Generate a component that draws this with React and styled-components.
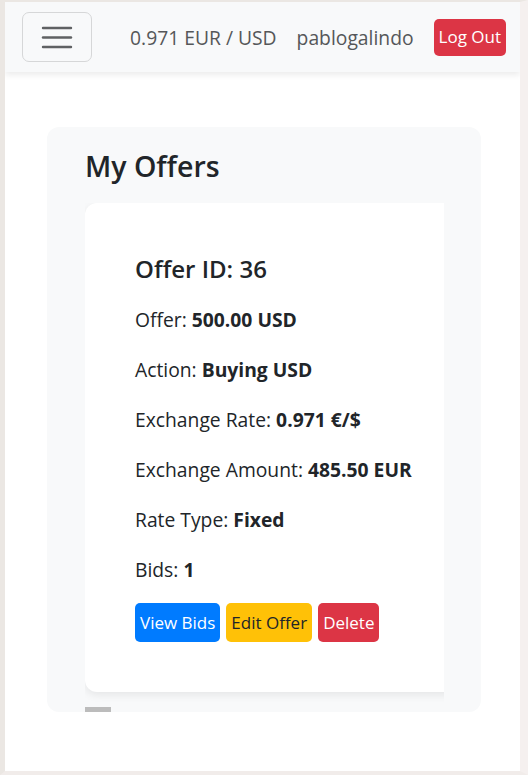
import React from "react";
import styled, { createGlobalStyle } from "styled-components";

const Global = createGlobalStyle`
  html, body { margin: 0; padding: 0; background: #ffffff; }
  body {
    font-family: "Open Sans", "Noto Sans", "Liberation Sans", sans-serif;
    color: #212529;
  }
  * { box-sizing: border-box; }
`;

const Frame = styled.div`
  width: 528px;
  height: 775px;
  border-style: solid;
  border-color: #ebe7e3 #f5f0ef #f1ecea #ebe7e3;
  border-width: 2px 8px 4px 5px;
  background: #ffffff;
  display: flex;
  flex-direction: column;
  overflow: hidden;
`;

const NavBar = styled.nav`
  height: 70px;
  flex: none;
  background: #f8f9fa;
  box-shadow: 0 3px 6px rgba(0, 0, 0, 0.08);
  display: flex;
  align-items: center;
  padding: 0 14px 0 17px;
`;

const Toggler = styled.button`
  width: 70px;
  height: 50px;
  border: 1px solid #d6d7d8;
  border-radius: 7px;
  background: transparent;
  display: flex;
  align-items: center;
  justify-content: center;
  padding: 0;
`;

const NavRight = styled.div`
  margin-left: auto;
  display: flex;
  align-items: center;
  gap: 20px;
`;

const NavText = styled.span`
  font-size: 19.3px;
  color: #555759;
`;

const Btn = styled.button`
  font-family: inherit;
  font-size: 17px;
  line-height: 1.5;
  height: ${(p) => p.$h || 39}px;
  padding: 0 5px;
  border: none;
  border-radius: 5px;
  background: ${(p) => p.$bg};
  color: ${(p) => p.$fg || "#ffffff"};
  display: inline-flex;
  align-items: center;
  justify-content: center;
`;

const Main = styled.main`
  padding: 55px 39px 0 42px;
`;

const Panel = styled.section`
  background: #f8f9fa;
  border-radius: 12px;
  padding: 22px 37px 0 38px;
`;

const Title = styled.h2`
  margin: 0 0 20px 0;
  font-size: 28.5px;
  font-weight: 600;
  line-height: 1.2;
  color: #212529;
`;

const Scroller = styled.div`
  overflow: hidden;
  padding-bottom: 15px;
`;

const Card = styled.article`
  width: 420px;
  background: #ffffff;
  border-radius: 12px;
  box-shadow: 0 3px 8px rgba(0, 0, 0, 0.08);
  padding: 52px 20px 50px 50px;
`;

const CardTitle = styled.h5`
  margin: 0 0 21px;
  font-size: 24px;
  font-weight: 600;
  line-height: 1.2;
`;

const Row = styled.p`
  margin: 0 0 20px;
  font-size: 19.3px;
  line-height: 30px;
  b { font-weight: 700; }
`;

const Actions = styled.div`
  display: flex;
  gap: 6px;
  margin-top: -2px;
`;

const Track = styled.div`
  height: 5px;
`;

const Thumb = styled.div`
  width: 26px;
  height: 5px;
  background: #bcbcbc;
`;

function Hamburger() {
  return (
    <svg width="32" height="24" viewBox="0 0 32 24">
      <g stroke="#5f6163" strokeWidth="2.4" strokeLinecap="round">
        <line x1="2" y1="3" x2="30" y2="3" />
        <line x1="2" y1="12.5" x2="30" y2="12.5" />
        <line x1="2" y1="22" x2="30" y2="22" />
      </g>
    </svg>
  );
}

const rows = [
  ["Offer", "500.00 USD"],
  ["Action", "Buying USD"],
  ["Exchange Rate", "0.971 €/$"],
  ["Exchange Amount", "485.50 EUR"],
  ["Rate Type", "Fixed"],
  ["Bids", "1"],
];

export default function App() {
  return (
    <>
      <Global />
      <Frame>
        <NavBar>
          <Toggler aria-label="menu">
            <Hamburger />
          </Toggler>
          <NavRight>
            <NavText>0.971 EUR / USD</NavText>
            <NavText>pablogalindo</NavText>
            <Btn $bg="#dc3545" $h={37}>Log Out</Btn>
          </NavRight>
        </NavBar>
        <Main>
          <Panel>
            <Title>My Offers</Title>
            <Scroller>
              <Card>
                <CardTitle>Offer ID: 36</CardTitle>
                {rows.map(([k, v]) => (
                  <Row key={k}>
                    {k}: <b>{v}</b>
                  </Row>
                ))}
                <Actions>
                  <Btn $bg="#007bff">View Bids</Btn>
                  <Btn $bg="#ffc107" $fg="#212529">Edit Offer</Btn>
                  <Btn $bg="#dc3545">Delete</Btn>
                </Actions>
              </Card>
            </Scroller>
            <Track>
              <Thumb />
            </Track>
          </Panel>
        </Main>
      </Frame>
    </>
  );
}
